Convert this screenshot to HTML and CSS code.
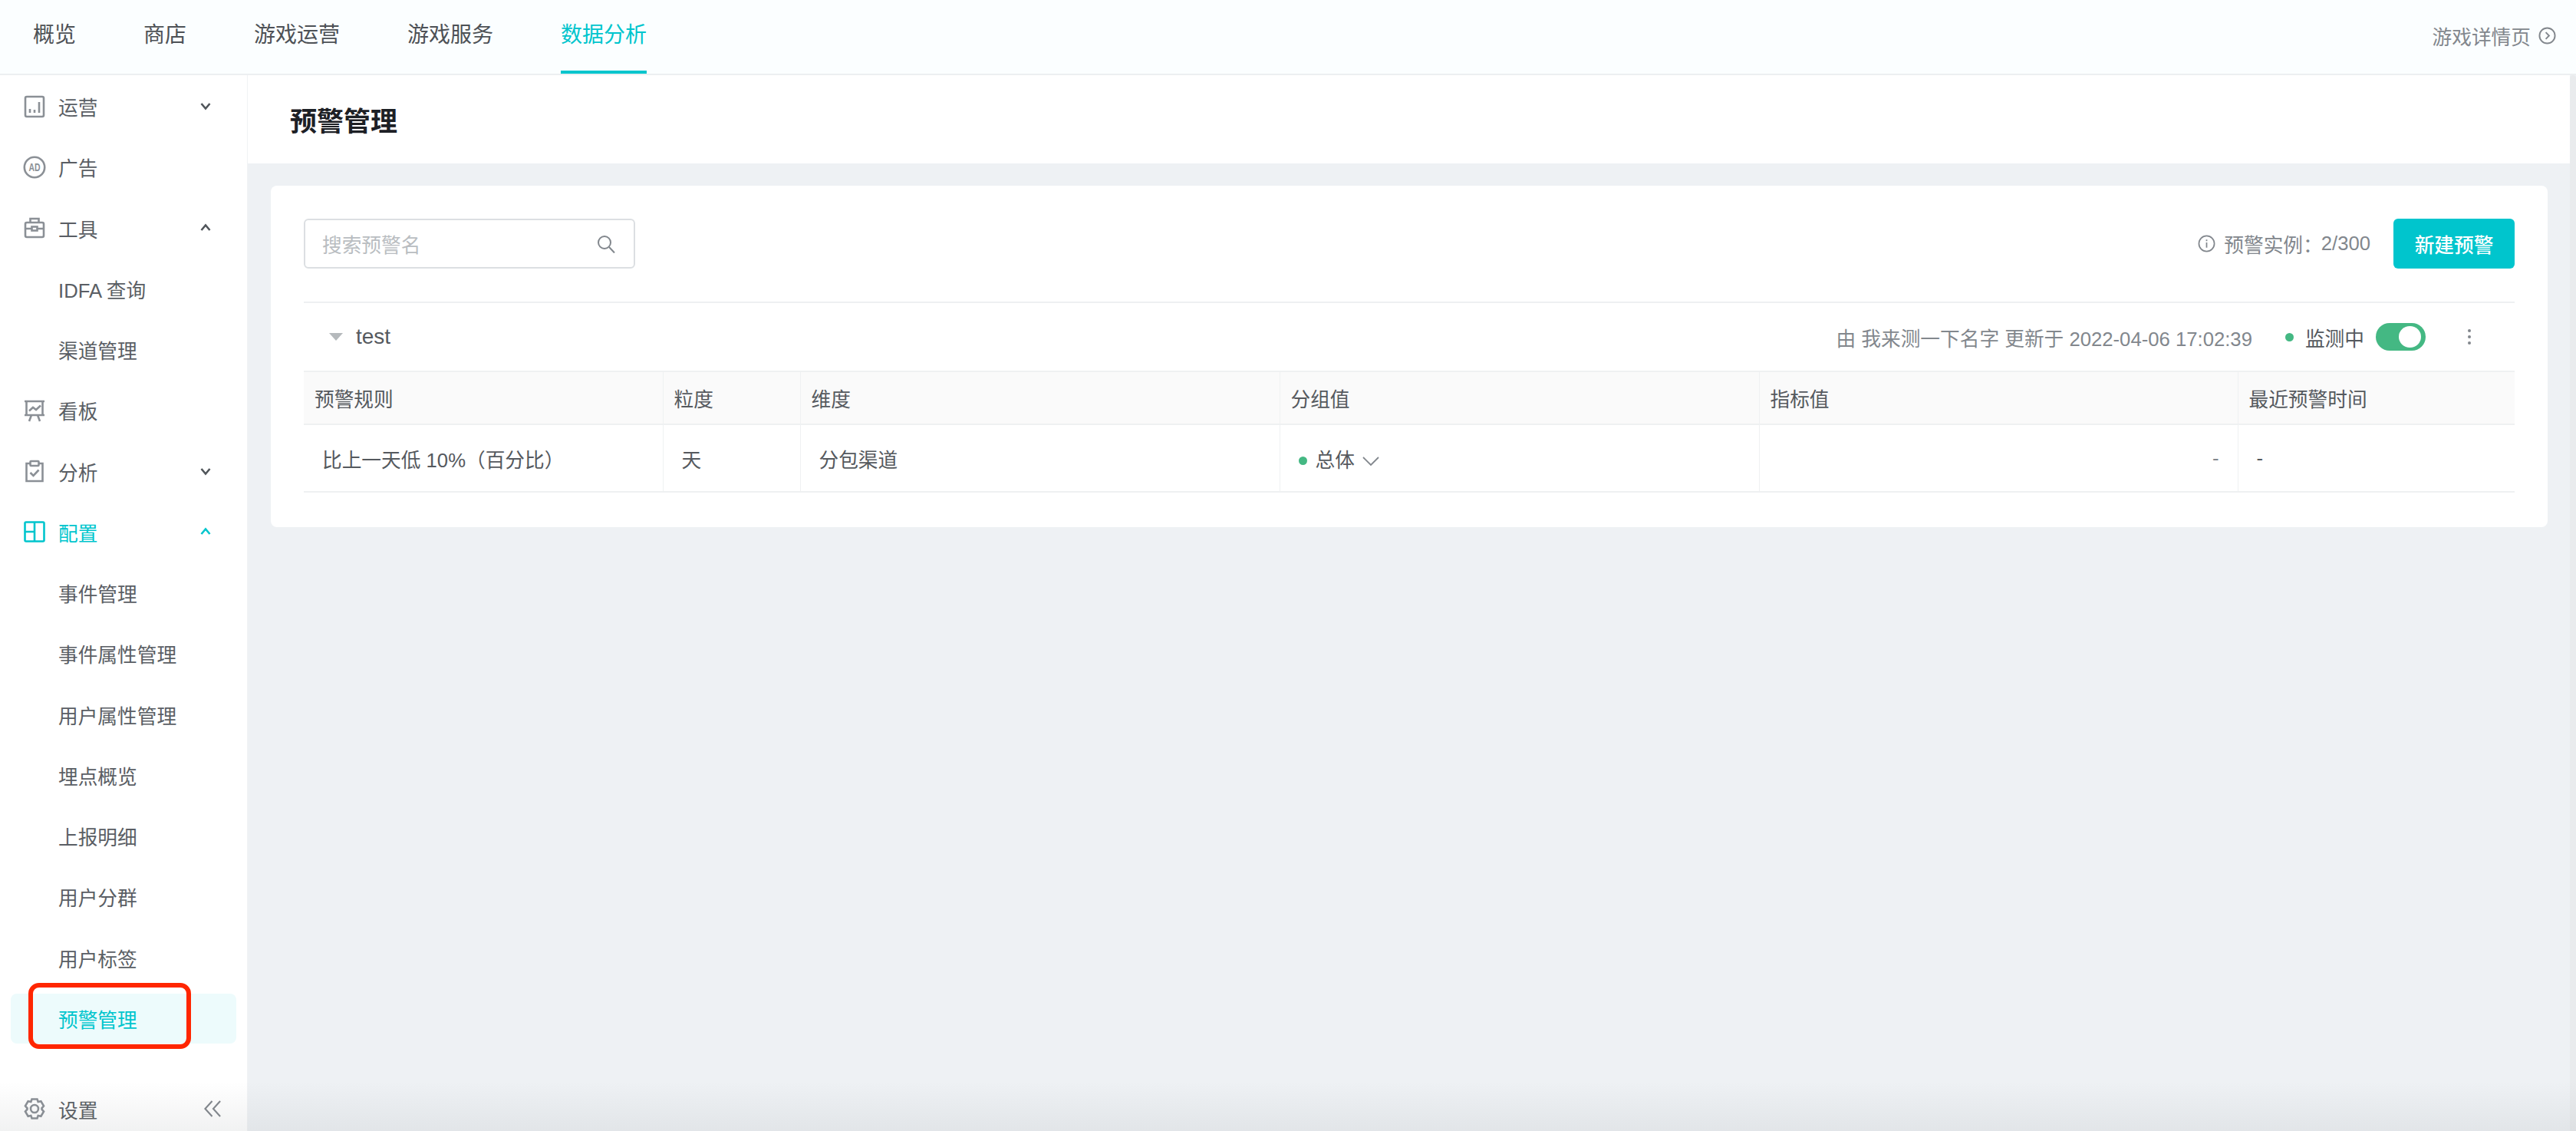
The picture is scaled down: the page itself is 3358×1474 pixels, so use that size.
FILE: index.html
```html
<!DOCTYPE html>
<html lang="zh-CN">
<head>
<meta charset="utf-8">
<title>预警管理</title>
<link rel="stylesheet" href="styles.css">
</head>
<body>
<div class="app">
  <header class="topbar">
    <nav class="tabs">
      <a class="tab">概览</a>
      <a class="tab">商店</a>
      <a class="tab">游戏运营</a>
      <a class="tab">游戏服务</a>
      <a class="tab tab-active">数据分析</a>
    </nav>
    <a class="detail-link">游戏详情页
      <svg class="detail-icon" viewBox="0 0 24 24"><circle cx="12" cy="12" r="10.5"/><path d="M10 7.5l4.5 4.5-4.5 4.5"/></svg>
    </a>
  </header>
  <div class="main">
    <aside class="sidebar">
      <ul class="menu">
        <li class="item">
          <svg class="ico" viewBox="0 0 30 30"><rect x="3" y="2" width="24" height="26" rx="2"/><path d="M9 23v-5M15 23v-4M21 23V9"/></svg>
          <span class="label">运营</span>
          <svg class="caret" viewBox="0 0 16 16"><path d="M2.5 5L8 11.5 13.5 5"/></svg>
        </li>
        <li class="item">
          <svg class="ico" viewBox="0 0 30 30"><circle cx="15" cy="15" r="13.2"/><text class="ad-text" x="15" y="20" textLength="15" lengthAdjust="spacingAndGlyphs">AD</text></svg>
          <span class="label">广告</span>
        </li>
        <li class="item">
          <svg class="ico" viewBox="0 0 30 30"><path d="M9.500 8V3h11v5"/><rect x="3" y="8" width="24" height="19" rx="2"/><path d="M3 16h8M19 16h8"/><rect x="11.500" y="13.500" width="7" height="5"/></svg>
          <span class="label">工具</span>
          <svg class="caret" viewBox="0 0 16 16"><path d="M2.500 11L8 4.500 13.500 11"/></svg>
        </li>
        <li class="item sub">IDFA 查询</li>
        <li class="item sub">渠道管理</li>
        <li class="item">
          <svg class="ico" viewBox="0 0 30 30"><path d="M2 3h26M2 21h26M4.500 3v18M25.500 3v18M11 21l-3 8M19 21l3 8M8 15.500l5-4.500 4 3 6-5.500"/></svg>
          <span class="label">看板</span>
        </li>
        <li class="item">
          <svg class="ico" viewBox="0 0 30 30"><path d="M9.500 5H4.500v23h21V5h-5"/><rect x="9.500" y="2" width="11" height="6" rx="1"/><path d="M9.500 17l4 4 7-7.500"/></svg>
          <span class="label">分析</span>
          <svg class="caret" viewBox="0 0 16 16"><path d="M2.500 5L8 11.500 13.500 5"/></svg>
        </li>
        <li class="item active-parent">
          <svg class="ico" viewBox="0 0 30 30"><rect x="2.500" y="2.500" width="25" height="25" rx="1.500"/><path d="M15 2.500v25M2.500 15H15"/></svg>
          <span class="label">配置</span>
          <svg class="caret" viewBox="0 0 16 16"><path d="M2.500 11L8 4.500 13.500 11"/></svg>
        </li>
        <li class="item sub">事件管理</li>
        <li class="item sub">事件属性管理</li>
        <li class="item sub">用户属性管理</li>
        <li class="item sub">埋点概览</li>
        <li class="item sub">上报明细</li>
        <li class="item sub">用户分群</li>
        <li class="item sub">用户标签</li>
        <li class="item sub selected">预警管理<span class="red-frame"></span></li>
      </ul>
      <div class="side-foot">
        <svg class="ico" viewBox="0 0 30 30"><path d="M11.500 2.500h7l1.200 3.600 3.700-.8 3.600 6.100-2.500 2.900 0 1.400 2.500 2.900-3.600 6.100-3.700-.8-1.200 3.600h-7l-1.200-3.600-3.700.8-3.600-6.100 2.500-2.900 0-1.400-2.500-2.900 3.600-6.100 3.700.8z"/><circle cx="15" cy="15" r="5"/></svg>
        <span class="label">设置</span>
        <svg class="collapse" viewBox="0 0 24 24"><path d="M11 1.500L1.500 12 11 22.500M22 1.500L12.500 12 22 22.500"/></svg>
      </div>
    </aside>
    <main class="content">
      <div class="page-head"><h1 class="page-title">预警管理</h1></div>
      <div class="page-body">
        <section class="card">
          <div class="toolbar">
            <div class="search">
              <span class="placeholder">搜索预警名</span>
              <svg class="search-ico" viewBox="0 0 24 24"><circle cx="10" cy="10" r="8"/><path d="M16 16l7 7.500"/></svg>
            </div>
            <div class="quota">
              <svg class="info-ico" viewBox="0 0 24 24"><circle cx="12" cy="12" r="10.500"/><path d="M12 10.500v7M12 6.500v2"/></svg>
              <span class="quota-text">预警实例：</span><span class="quota-num">2/300</span>
            </div>
            <button class="primary">新建预警</button>
          </div>
          <div class="group-row">
            <span class="tri"></span>
            <span class="group-name">test</span>
            <span class="meta">由 我来测一下名字 更新于 2022-04-06 17:02:39</span>
            <span class="dot dot-status"></span>
            <span class="status">监测中</span>
            <span class="toggle"><span class="knob"></span></span>
            <span class="more"><i></i><i></i><i></i></span>
          </div>
          <table class="grid">
            <colgroup>
              <col class="c1"><col class="c2"><col class="c3"><col class="c4"><col class="c5"><col class="c6">
            </colgroup>
            <thead>
              <tr><th>预警规则</th><th>粒度</th><th>维度</th><th>分组值</th><th>指标值</th><th>最近预警时间</th></tr>
            </thead>
            <tbody>
              <tr>
                <td>比上一天低 10%（百分比）</td>
                <td>天</td>
                <td>分包渠道</td>
                <td><span class="dot dot-cell"></span>总体<svg class="cell-chev" viewBox="0 0 22 12"><path d="M1 1l10 10L21 1"/></svg></td>
                <td class="right">-</td>
                <td>-</td>
              </tr>
            </tbody>
          </table>
        </section>
      </div>
    </main>
    <div class="scrollbar"></div>
  </div>
</div>
</body>
</html>
```
FILE: styles.css
```css
* { box-sizing: border-box; }
html, body { margin: 0; height: 100%; }
body {
  font-family: "Liberation Sans", "Noto Sans CJK SC", sans-serif;
  font-size: 25.7px;
  color: #55595e;
  background: #eef1f4;
  overflow: hidden;
}
.app { display: flex; flex-direction: column; height: 1474px; position: relative; }
.app::after {
  content: "";
  position: absolute;
  left: 0; right: 0; bottom: 0;
  height: 64px;
  background: linear-gradient(to bottom, rgba(120,125,130,0), rgba(120,125,130,.10));
  pointer-events: none;
}

.topbar {
  height: 98px;
  flex: none;
  display: flex;
  align-items: flex-start;
  justify-content: space-between;
  padding: 0 26px 0 43px;
  background: #fbfeff;
  border-bottom: 2px solid #eceff1;
}
.tabs { display: flex; gap: 88px; height: 96px; }
.tab {
  font-size: 28px;
  line-height: 92px;
  color: #4d5156;
  height: 96px;
  width: max-content;
}
.tab-active { color: #00c5cd; border-bottom: 4px solid #00c5cd; padding: 0; }
.detail-link {
  display: flex;
  align-items: center;
  gap: 10px;
  height: 92px;
  color: #82878d;
  font-size: 25.7px;
}
.detail-icon { width: 23px; height: 23px; fill: none; stroke: #82878d; stroke-width: 2; }

.main { flex: 1; display: flex; min-height: 0; }

.sidebar {
  width: 323px;
  flex: none;
  display: flex;
  flex-direction: column;
  background: #fff;
  border-right: 1px solid #f1f3f5;
}
.menu { list-style: none; margin: 0; padding: 8px 14px 0; }
.item {
  height: 65px;
  margin-bottom: 14.25px;
  display: flex;
  align-items: center;
  padding-left: 16px;
  position: relative;
  color: #5a5e64;
  border-radius: 8px;
}
.item.sub { padding-left: 62px; }
.ico {
  width: 30px;
  height: 30px;
  flex: none;
  fill: none;
  stroke: #8b9096;
  stroke-width: 2.600;
}
.ad-text {
  font-family: "Liberation Sans", sans-serif;
  font-size: 15px;
  text-anchor: middle;
  fill: #8b9096;
  stroke: none;
  font-weight: 700;
}
.label { margin-left: 16px; }
.caret {
  width: 16px;
  height: 16px;
  position: absolute;
  right: 32px;
  top: 24px;
  fill: none;
  stroke: #50555a;
  stroke-width: 2.600;
}
.active-parent { color: #00c5cd; }
.active-parent .ico { stroke: #00c5cd; }
.active-parent .caret { stroke: #00c5cd; }
.selected { background: #edfbfc; color: #00c5cd; }
.red-frame {
  position: absolute;
  left: 23px;
  top: -14px;
  width: 212px;
  height: 86px;
  border: 6px solid #ff2600;
  border-radius: 14px;
}
.side-foot {
  margin-top: auto;
  height: 58px;
  display: flex;
  align-items: center;
  padding-left: 30px;
  padding-bottom: 0;
  color: #5a5e64;
  position: relative;
}
.collapse {
  width: 23px;
  height: 24px;
  position: absolute;
  right: 33px;
  top: 17px;
  fill: none;
  stroke: #82878d;
  stroke-width: 2.200;
}

.content { flex: 1; min-width: 0; display: flex; flex-direction: column; }
.page-head {
  height: 115px;
  flex: none;
  background: #fff;
  display: flex;
  align-items: center;
  padding-left: 55px;
}
.page-title { margin: 0; font-size: 35px; font-weight: 700; color: #1d2025; }
.page-body { flex: 1; padding: 29px 29px 0 30px; }
.card { background: #fff; border-radius: 8px; padding: 43px 43px 45px; }
.toolbar {
  display: flex;
  align-items: center;
  height: 65px;
  margin-bottom: 43px;
}
.search {
  width: 432px;
  height: 65px;
  border: 2px solid #dcdfe2;
  border-radius: 6px;
  display: flex;
  align-items: center;
  justify-content: space-between;
  padding: 0 24px 0 22px;
}
.placeholder { color: #b9bdc1; }
.search-ico { width: 24px; height: 24px; fill: none; stroke: #82878d; stroke-width: 2; }
.quota { margin-left: auto; display: flex; align-items: center; color: #82878d; margin-right: 30px; }
.info-ico { width: 23px; height: 23px; margin-right: 11px; fill: none; stroke: #82878d; stroke-width: 1.800; }
.quota-num { margin-left: -2px; }
.primary {
  width: 158px;
  height: 65px;
  border: 0;
  border-radius: 6px;
  background: #00c5cd;
  color: #fff;
  font: inherit;
  font-weight: 500;
  padding: 0;
}

.group-row {
  height: 90px;
  border-top: 2px solid #eef0f2;
  display: flex;
  align-items: center;
  padding-left: 33px;
}
.tri {
  width: 0;
  height: 0;
  border-left: 9px solid transparent;
  border-right: 9px solid transparent;
  border-top: 10px solid #b5b9bc;
  margin-right: 17px;
}
.group-name { font-size: 28px; color: #55595e; }
.meta { margin-left: auto; color: #82878d; }
.dot { display: inline-block; width: 11px; height: 11px; border-radius: 50%; background: #44b883; }
.dot-status { margin-left: 43px; margin-right: 15px; }
.status { color: #55595e; }
.toggle {
  width: 65px;
  height: 36px;
  margin-left: 15px;
  border-radius: 18px;
  background: #44b883;
  display: flex;
  align-items: center;
  justify-content: flex-end;
  padding-right: 6px;
}
.knob { width: 29px; height: 28px; border-radius: 50%; background: #fff; }
.more {
  display: flex;
  flex-direction: column;
  gap: 4px;
  margin-left: 55px;
  margin-right: 57px;
}
.more i { width: 4px; height: 4px; border-radius: 50%; background: #82878d; display: block; }

.grid { width: 100%; table-layout: fixed; border-collapse: collapse; }
.c1 { width: 468px; }
.c2 { width: 179px; }
.c3 { width: 625px; }
.c4 { width: 625px; }
.c5 { width: 624px; }
.c6 { width: 361px; }
.grid th, .grid td { border: 2px solid #eff1f2; border-left-width: 1px; border-right-width: 1px; text-align: left; font-weight: 400; }
.grid tr > :first-child { border-left: 0; }
.grid tr > :last-child { border-right: 0; }
.grid th {
  height: 69px;
  padding: 0 14px;
  background: #fafafa;
  color: #55595e;
}
.grid td { height: 88px; padding: 0 24px; color: #55595e; }
.grid td.right { text-align: right; color: #82878d; }
.dot-cell { margin: 0 11px 3px 0; vertical-align: middle; }
.cell-chev { width: 22px; height: 12px; margin-left: 10px; fill: none; stroke: #82878d; stroke-width: 1.800; vertical-align: 2px; }

.scrollbar { width: 8px; flex: none; background: #e9ebed; border-radius: 4px 4px 0 0; }
```
